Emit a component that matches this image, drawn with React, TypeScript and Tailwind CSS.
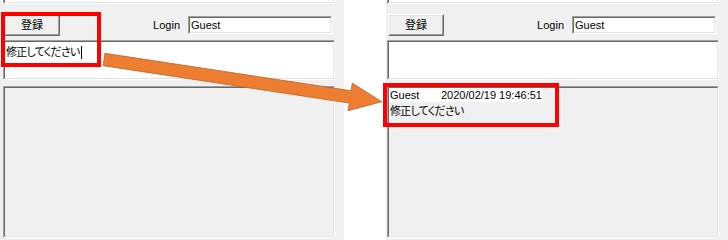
import React from 'react';

function Sunken({
  className = '',
  inner = '',
  children,
}: {
  className?: string;
  inner?: string;
  children?: React.ReactNode;
}) {
  return (
    <div
      className={`border border-t-[#a0a0a0] border-l-[#a0a0a0] border-b-white border-r-white ${className}`}
    >
      <div
        className={`h-full border border-t-[#696969] border-l-[#696969] border-b-[#e3e3e3] border-r-[#e3e3e3] ${inner}`}
      >
        {children}
      </div>
    </div>
  );
}

function Panel({
  memo,
  log,
}: {
  memo?: React.ReactNode;
  log?: React.ReactNode;
}) {
  return (
    <div className="w-[344px] h-[240px] bg-[#f0f0f0] flex flex-col">
      <Sunken className="ml-[3px] w-[332px] h-[4px] border-t-0" inner="border-t-0 bg-white" />
      <div className="mt-[10px] h-[22px] flex items-center">
        <button className="ml-[4px] w-[56px] h-[22px] border border-t-white border-l-white border-b-[#696969] border-r-[#696969] bg-[#f0f0f0]">
          <div className="h-full border border-t-[#e3e3e3] border-l-[#e3e3e3] border-b-[#a0a0a0] border-r-[#a0a0a0] flex items-center justify-center">
            登録
          </div>
        </button>
        <span className="ml-auto mr-[8px]">Login</span>
        <Sunken className="mr-[12px] w-[144px] h-[18px]" inner="bg-white flex items-center pl-px">
          Guest
        </Sunken>
      </div>
      <Sunken className="mt-[4px] ml-[3px] w-[332px] h-[40px]" inner="bg-white">
        {memo}
      </Sunken>
      <Sunken className="mt-[6px] ml-[3px] w-[332px] h-[152px]" inner="bg-[#f0f0f0]">
        {log}
      </Sunken>
    </div>
  );
}

function Arrow() {
  return (
    <svg
      className="absolute left-0 top-0 pointer-events-none"
      width="728"
      height="240"
      viewBox="0 0 728 240"
    >
      <g transform="translate(104 59.5) rotate(8.64)">
        <polygon
          points="0,-6.25 249,-6.25 249,-14 281,0 249,14 249,6.25 0,6.25"
          fill="#ed7d31"
          stroke="#b9652c"
          strokeWidth="0.75"
        />
      </g>
    </svg>
  );
}

export default function App() {
  return (
    <div className="relative w-[728px] h-[240px] overflow-hidden bg-white text-black text-[11px] leading-[13px] font-['Liberation_Sans','Noto_Sans_CJK_JP',sans-serif] [font-feature-settings:'palt']">
      <div className="flex">
        <Panel
          memo={
            <div className="pl-px pt-[4px] flex items-center">
              <span className="tracking-[-0.75px]">修正してください</span>
              <span className="ml-px inline-block w-px h-[13px] bg-black" />
            </div>
          }
        />
        <div className="w-[42px] h-[240px] bg-white" />
        <div className="w-[342px] h-[240px] overflow-hidden">
          <div className="-ml-[2px]">
            <Panel
              log={
                <div className="leading-[14px]">
                  <div>
                    <span className="inline-block bg-white px-px">
                      <span className="inline-block w-[51px]">Guest</span>
                      2020/02/19 19:46:51
                    </span>
                  </div>
                  <div className="pl-px pt-[2px] tracking-[-0.75px]">修正してください</div>
                </div>
              }
            />
          </div>
        </div>
      </div>

      <div className="absolute left-[1px] top-[12px] w-[100px] h-[55px] border-4 border-[#ff0000]" />
      <div className="absolute left-[383px] top-[83px] w-[176px] h-[44px] border-4 border-[#ff0000]" />
      <Arrow />
    </div>
  );
}
